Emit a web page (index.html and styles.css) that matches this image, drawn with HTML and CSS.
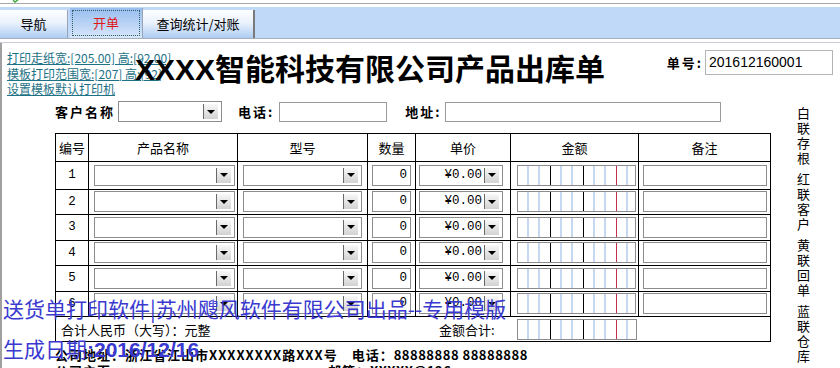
FILE: index.html
```html
<!DOCTYPE html>
<html lang="zh-CN">
<head>
    <meta charset="UTF-8">
    <title>产品出库单</title>
    <link rel="stylesheet" href="styles.css">
</head>
<body>
    <div class="topbar">
        <svg class="tick" width="8" height="3" viewBox="0 0 8 3"><polyline points="1,0 3,2 6,0" fill="none" stroke="#3aa83a" stroke-width="1.4"/></svg>
        <div class="tabstrip">
            <div class="tabs">
                <div class="tab tab-nav">导航</div>
                <div class="tab tab-active"><span class="focus">开单</span></div>
                <div class="tab tab-last">查询统计/对账</div>
            </div>
        </div>
    </div>

    <div class="sheet">
        <div class="head">
            <div class="links">
                <a href="#">打印走纸宽:[205.00] 高:[92.00]</a>
                <a href="#">模板打印范围宽:[207] 高:[92]</a>
                <a href="#">设置模板默认打印机</a>
            </div>
            <h1 class="title">XXXX智能科技有限公司产品出库单</h1>
            <div class="billno">
                <label>单号:</label>
                <div class="field bill-field">201612160001</div>
            </div>
        </div>

        <div class="main">
            <div class="form">
                <div class="customer">
                    <label>客户名称</label>
                    <div class="combo cust-name"><span class="combo-text"></span><span class="drop"></span></div>
                    <label class="phone-label">电话:</label>
                    <div class="field phone-field"></div>
                    <label class="addr-label">地址:</label>
                    <div class="field addr-field"></div>
                </div>

                <table class="items">
                    <colgroup>
                        <col style="width:33px"><col style="width:149px"><col style="width:130px"><col style="width:48px">
                        <col style="width:95px"><col style="width:128px"><col style="width:132px">
                    </colgroup>
                    <tr class="head-row">
                        <th>编号</th><th>产品名称</th><th>型号</th><th>数量</th><th>单价</th><th>金额</th><th>备注</th>
                    </tr>
                    <tr class="first">
                        <td class="num">1</td>
                        <td class="c-name"><div class="combo"><span class="combo-text"></span><span class="drop"></span></div></td>
                        <td class="c-model"><div class="combo"><span class="combo-text"></span><span class="drop"></span></div></td>
                        <td class="c-qty"><div class="box">0</div></td>
                        <td class="c-price"><div class="combo"><span class="combo-text">¥0.00</span><span class="drop"></span></div></td>
                        <td class="c-amount"><div class="digits"></div></td>
                        <td class="c-note"><div class="box"></div></td>
                    </tr>
                    <tr>
                        <td class="num">2</td>
                        <td class="c-name"><div class="combo"><span class="combo-text"></span><span class="drop"></span></div></td>
                        <td class="c-model"><div class="combo"><span class="combo-text"></span><span class="drop"></span></div></td>
                        <td class="c-qty"><div class="box">0</div></td>
                        <td class="c-price"><div class="combo"><span class="combo-text">¥0.00</span><span class="drop"></span></div></td>
                        <td class="c-amount"><div class="digits"></div></td>
                        <td class="c-note"><div class="box"></div></td>
                    </tr>
                    <tr>
                        <td class="num">3</td>
                        <td class="c-name"><div class="combo"><span class="combo-text"></span><span class="drop"></span></div></td>
                        <td class="c-model"><div class="combo"><span class="combo-text"></span><span class="drop"></span></div></td>
                        <td class="c-qty"><div class="box">0</div></td>
                        <td class="c-price"><div class="combo"><span class="combo-text">¥0.00</span><span class="drop"></span></div></td>
                        <td class="c-amount"><div class="digits"></div></td>
                        <td class="c-note"><div class="box"></div></td>
                    </tr>
                    <tr>
                        <td class="num">4</td>
                        <td class="c-name"><div class="combo"><span class="combo-text"></span><span class="drop"></span></div></td>
                        <td class="c-model"><div class="combo"><span class="combo-text"></span><span class="drop"></span></div></td>
                        <td class="c-qty"><div class="box">0</div></td>
                        <td class="c-price"><div class="combo"><span class="combo-text">¥0.00</span><span class="drop"></span></div></td>
                        <td class="c-amount"><div class="digits"></div></td>
                        <td class="c-note"><div class="box"></div></td>
                    </tr>
                    <tr>
                        <td class="num">5</td>
                        <td class="c-name"><div class="combo"><span class="combo-text"></span><span class="drop"></span></div></td>
                        <td class="c-model"><div class="combo"><span class="combo-text"></span><span class="drop"></span></div></td>
                        <td class="c-qty"><div class="box">0</div></td>
                        <td class="c-price"><div class="combo"><span class="combo-text">¥0.00</span><span class="drop"></span></div></td>
                        <td class="c-amount"><div class="digits"></div></td>
                        <td class="c-note"><div class="box"></div></td>
                    </tr>
                    <tr>
                        <td class="num">6</td>
                        <td class="c-name"><div class="combo"><span class="combo-text"></span><span class="drop"></span></div></td>
                        <td class="c-model"><div class="combo"><span class="combo-text"></span><span class="drop"></span></div></td>
                        <td class="c-qty"><div class="box">0</div></td>
                        <td class="c-price"><div class="combo"><span class="combo-text">¥0.00</span><span class="drop"></span></div></td>
                        <td class="c-amount"><div class="digits"></div></td>
                        <td class="c-note"><div class="box"></div></td>
                    </tr>
                    <tr class="total">
                        <td colspan="4" class="total-words">合计人民币（大写）：元整</td>
                        <td class="total-label">金额合计:</td>
                        <td class="c-amount"><div class="digits"></div></td>
                        <td></td>
                    </tr>
                </table>

                <div class="footer">
                    <p>公司地址：浙江省江山市XXXXXXXX路XXX号<span class="tel">电话：<span class="digits-text">88888888 88888888</span></span></p>
                    <p>公司主页<span class="mail">邮箱：<span class="digits-text">XXXXX@126</span></span></p>
                </div>
            </div>

            <div class="copies">
                <div class="copy">白联存根</div>
                <div class="copy">红联客户</div>
                <div class="copy">黄联回单</div>
                <div class="copy">蓝联仓库</div>
            </div>
        </div>
    </div>

    <!-- watermark drawn over the form -->
    <div class="watermark">
        <div>送货单打印软件|苏州飕风软件有限公司出品--专用模版</div>
        <div class="wm-date">生成日期<span class="date">:2016/12/16</span></div>
    </div>
</body>
</html>
```

FILE: styles.css
```css
* {
    margin: 0;
    padding: 0;
    box-sizing: border-box;
}
body {
    width: 840px;
    height: 368px;
    overflow: hidden;
    position: relative;
    background: #fff;
    color: #000;
    font-family: "Noto Sans CJK SC", sans-serif;
    font-size: 13px;
}

/* top tab strip */
.topbar {
    height: 43px;
}
.tick {
    display: block;
    margin-left: 12px;
}
.tabstrip {
    height: 40px;
    border-top: 1px solid #a8a8a8;
    border-bottom: 1px solid #c8ccd6;
    background: linear-gradient(to bottom, #fff 0 3px, #c0d9f9 3px 34px, #a6aebc 34px 35px, #fff 35px);
}
.tabs {
    display: flex;
    align-items: flex-end;
    height: 34px;
}
.tab {
    height: 28px;
    line-height: 28px;
    text-align: center;
    font-size: 13px;
    background: linear-gradient(to bottom, #fdfeff 0%, #eaf2fc 45%, #aecdf3 100%);
    border-right: 1px solid #9aa4b4;
}
.tab-nav {
    width: 68px;
}
.tab-active {
    width: 73px;
    height: 30px;
    margin-left: 2px;
    padding: 2px;
    color: #e01818;
    background: linear-gradient(to bottom, #98bdef, #d8e7fa);
}
.tab-active .focus {
    display: block;
    height: 100%;
    line-height: 24px;
    border: 1px dotted #2e5e66;
}
.tab-last {
    width: 112px;
    border-right: 2px solid #7a7a7a;
}

/* sheet */
.sheet {
    height: 325px;
    border-left: 2px solid #a0a0a0;
    padding: 7px 7px 0 5px;
}
.head {
    display: grid;
    grid-template-columns: 1fr auto;
}
.links {
    grid-area: 1 / 1;
    display: flex;
    flex-direction: column;
    align-items: flex-start;
}
.links a {
    color: #1e7286;
    font-size: 12px;
    line-height: 15.5px;
    text-decoration: underline;
}
.title {
    grid-area: 1 / 1;
    margin: 3px 0 0 128px;
    font-family: "Liberation Sans", "Noto Sans CJK SC", sans-serif;
    font-size: 30px;
    line-height: 34px;
    font-weight: bold;
    white-space: nowrap;
}
.billno {
    grid-area: 1 / 2;
    display: flex;
    align-items: center;
    align-self: start;
    height: 25px;
}
.billno label {
    font-weight: bold;
    letter-spacing: 2px;
    margin-right: 2px;
}
.field {
    border: 1px solid #999;
    background: #fff;
}
.bill-field {
    width: 128px;
    height: 25px;
    border-color: #b4b4b4;
    padding-left: 3px;
    font-family: "Liberation Sans", sans-serif;
    font-size: 14px;
    line-height: 23px;
}

.main {
    display: flex;
    margin-top: 5px;
}
.form {
    width: 715px;
    margin-left: 48px;
}
.customer {
    display: flex;
    align-items: center;
    height: 20px;
}
.customer label {
    font-weight: bold;
    letter-spacing: 2px;
    line-height: 20px;
}
.cust-name {
    width: 104px;
    height: 20px;
    margin-left: 3px;
}
.phone-label {
    margin-left: 16px;
}
.phone-field {
    width: 108px;
    height: 20px;
    margin-left: 5px;
}
.addr-label {
    margin-left: 18px;
}
.addr-field {
    width: 276px;
    height: 20px;
    margin-left: 4px;
}

/* combo boxes and inputs */
.combo {
    display: flex;
    height: 21px;
    border: 1px solid #8c8c8c;
    padding: 2px 3px 2px 0;
    background: #fff;
}
.combo-text {
    flex: 1;
    text-align: right;
    padding-right: 2px;
    font-family: "Liberation Mono", monospace;
    font-size: 12.5px;
    line-height: 15px;
}
.drop {
    width: 15px;
    border-left: 1px solid #6a6a6a;
    background: linear-gradient(to bottom, #f8f8f8, #d2d2d2);
    display: flex;
    align-items: center;
    justify-content: center;
}
.drop::after {
    content: "";
    border-left: 4px solid transparent;
    border-right: 4px solid transparent;
    border-top: 4px solid #000;
}
.box {
    height: 21px;
    border: 1px solid #8c8c8c;
    padding-right: 3px;
    text-align: right;
    font-family: "Liberation Mono", monospace;
    font-size: 12.5px;
    line-height: 19px;
}
.digits {
    height: 21px;
    border: 1px solid #8c8c8c;
    background:
        linear-gradient(to right, transparent 31px, #fff 31px 32px, #000 32px 33px, transparent 33px 64px, #fff 64px 65px, #000 65px 66px, transparent 66px 97px, #fff 97px 98px, #c43050 98px 99px, transparent 99px),
        repeating-linear-gradient(to right, #fff 0 9px, #c6d9f1 9px 11px);
}

/* item table */
.items {
    margin-top: 11px;
    width: 715px;
    border-collapse: collapse;
    table-layout: fixed;
}
.items th,
.items td {
    border: 1px solid #000;
    padding: 0;
    vertical-align: middle;
}
.items th {
    height: 28px;
    font-weight: normal;
    font-size: 13px;
    text-align: center;
}
.items tr {
    height: 25.5px;
}
.items tr.first {
    height: 28px;
}
.num {
    text-align: center;
    font-family: "Liberation Mono", monospace;
    font-size: 12.5px;
}
.c-name {
    padding: 0 2px 0 5px !important;
}
.c-model {
    padding: 0 5px !important;
}
.c-qty {
    padding: 0 4px !important;
}
.c-price {
    padding: 0 7px 0 3px !important;
}
.c-amount {
    padding: 0 2px 0 6px !important;
}
.c-note {
    padding: 0 3px 0 4px !important;
}
.items tr.total {
    height: 25px;
}
.items .total td {
    border-left: none;
    border-right: none;
}
.items .total td:first-child {
    border-left: 1px solid #000;
}
.items .total td:last-child {
    border-right: 1px solid #000;
}
.total-words {
    padding-left: 5px !important;
}
.total-label {
    text-align: right;
    padding-right: 16px !important;
}

.footer {
    margin-top: 5px;
}
.footer p {
    font-weight: bold;
    letter-spacing: 1px;
    line-height: 16px;
    white-space: nowrap;
}
.tel {
    margin-left: 14px;
}
.mail {
    margin-left: 217px;
}
.digits-text {
    letter-spacing: 0.5px;
}

/* copy labels on the right */
.copies {
    margin-left: 26px;
    padding-top: 5px;
    display: flex;
    flex-direction: column;
    gap: 6px;
}
.copy {
    writing-mode: vertical-rl;
    font-size: 13px;
    letter-spacing: 2px;
    line-height: 14px;
}

.watermark {
    position: absolute;
    left: 3px;
    top: 295px;
    color: #3a3ad0;
    font-size: 21px;
    line-height: 26px;
    white-space: nowrap;
    pointer-events: none;
}
.wm-date {
    margin-top: 14px;
}
.watermark .date {
    font-family: "Liberation Sans", sans-serif;
    font-weight: bold;
}
```
